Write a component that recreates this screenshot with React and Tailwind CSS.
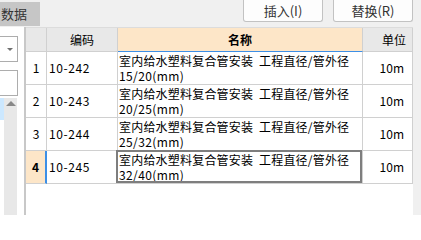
const rows = [
  { no: '1', code: '10-242', size: '15/20(mm)' },
  { no: '2', code: '10-243', size: '20/25(mm)' },
  { no: '3', code: '10-244', size: '25/32(mm)' },
  { no: '4', code: '10-245', size: '32/40(mm)', current: true },
];

const font = { fontFamily: '"Noto Sans CJK SC", "Noto Sans", sans-serif' };

function TopBar() {
  return (
    <div className="h-[27px] shrink-0 flex bg-[#f0f0f0]">
      <div className="mt-[2px] w-[40px] h-[24px] bg-[#c6c6c6] pl-[1px] text-[13px] leading-[24px] text-[#333]">数据</div>
      <div className="ml-auto mr-[8px] flex gap-[10px]">
        <button className="w-[80px] h-[22px] bg-[#fdfdfd] border border-t-0 border-[#c2c2c2] rounded-b-[3px] flex items-center justify-center text-[13px] text-[#333]">插入(I)</button>
        <button className="w-[80px] h-[22px] bg-[#fdfdfd] border border-t-0 border-[#c2c2c2] rounded-b-[3px] flex items-center justify-center text-[13px] text-[#333]">替换(R)</button>
      </div>
    </div>
  );
}

function SidePanel() {
  return (
    <div className="w-[26px] shrink-0 bg-white border-r-2 border-[#c8c8c8] flex flex-col pt-[9px]">
      <div className="w-[18px] h-[26px] border border-l-0 border-[#adadad] flex items-center justify-end pr-[4px]">
        <div className="w-0 h-0 border-l-[3px] border-r-[3px] border-t-[3px] border-l-transparent border-r-transparent border-t-[#707070]" />
      </div>
      <div className="mt-[8px] w-[18px] h-[26px] border border-l-0 border-[#adadad]" />
      <div className="mt-[2px] flex flex-1">
        <div className="w-[4px] h-[22px] bg-[#cce8ff]" />
        <div className="w-[13px] bg-[#e8e8e8] flex justify-center pt-[3px]">
          <div className="w-0 h-0 border-l-[5px] border-r-[5px] border-b-[5px] border-l-transparent border-r-transparent border-b-[#888]" />
        </div>
      </div>
    </div>
  );
}

function Grid() {
  return (
    <div className="w-[387px] shrink-0 bg-white border-t border-[#dcdcdc]">
      <div className="grid grid-cols-[21px_71px_245px_50px] text-[12px] text-black">
        <div className="h-[24px] bg-[#e8e8e8] border-r border-b border-[#d0d0d0]" />
        <div className="h-[24px] bg-[#e8e8e8] border-r border-b border-[#d0d0d0] flex items-center justify-center">编码</div>
        <div className="h-[24px] bg-[#fde6c8] border-r border-[#d0d0d0] border-b border-b-[#3d8fe6] flex items-center justify-center font-bold">名称</div>
        <div className="h-[24px] bg-[#e8e8e8] border-r border-b border-[#d0d0d0] flex items-center justify-end pr-[6px]">单位</div>

        {rows.map((r) => (
          <div key={r.no} className="contents">
            <div className={r.current
              ? 'h-[33px] bg-[#fde6c8] border-r-2 border-r-[#3d8fe6] border-b border-b-[#d0d0d0] flex items-center justify-center font-bold'
              : 'h-[33px] border-r border-b border-[#d0d0d0] flex items-center justify-center'}>{r.no}</div>
            <div className="h-[33px] border-r border-b border-[#d0d0d0] flex items-center pl-[2px] tracking-[0.6px]">{r.code}</div>
            <div className="relative h-[33px] border-r border-b border-[#d0d0d0] flex items-center pl-[1px] leading-[15px]">
              <div>
                <div className="tracking-[0.2px]">室内给水塑料复合管安装&nbsp; 工程直径/管外径</div>
                <div className="tracking-[0.4px]">{r.size}</div>
              </div>
              {r.current && <div className="absolute left-[-2px] top-[-1px] right-0 bottom-0 border-2 border-[#7e7e7e]" />}
            </div>
            <div className="h-[33px] border-r border-b border-[#d0d0d0] flex items-center justify-end pr-[8px]">10m</div>
          </div>
        ))}
      </div>
    </div>
  );
}

export default function App() {
  return (
    <div className="w-[421px] h-[215px] overflow-hidden bg-[#f0f0f0] flex flex-col" style={font}>
      <TopBar />
      <div className="flex flex-1 min-h-0">
        <SidePanel />
        <Grid />
        <div className="flex-1 bg-[#f0f0f0]" />
      </div>
    </div>
  );
}
